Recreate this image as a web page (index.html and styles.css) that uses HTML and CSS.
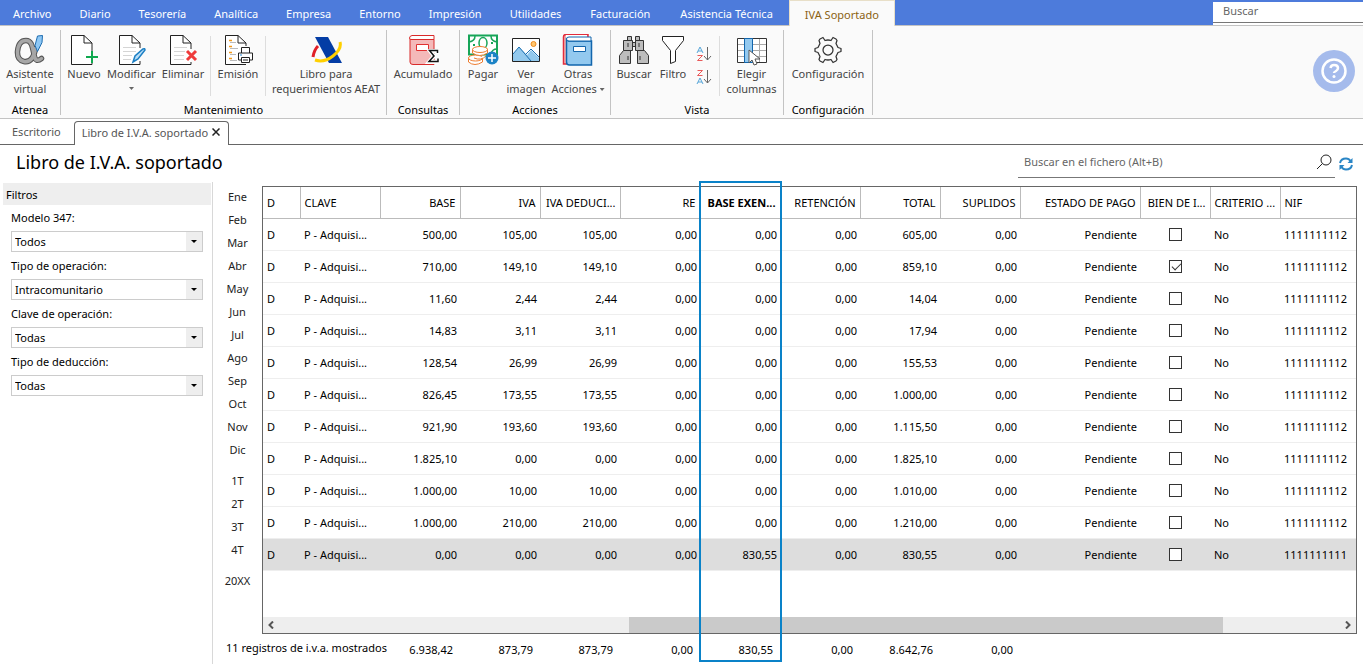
FILE: index.html
```html
<!DOCTYPE html>
<html lang="es">
<head>
<meta charset="utf-8">
<title>Libro de I.V.A. soportado</title>
<link rel="stylesheet" href="styles.css">
</head>
<body>
<nav class="menu">
  <button class="menu-item file">Archivo</button>
  <button class="menu-item">Diario</button>
  <button class="menu-item">Tesorería</button>
  <button class="menu-item">Analítica</button>
  <button class="menu-item">Empresa</button>
  <button class="menu-item">Entorno</button>
  <button class="menu-item">Impresión</button>
  <button class="menu-item">Utilidades</button>
  <button class="menu-item wide">Facturación</button>
  <button class="menu-item wide">Asistencia Técnica</button>
  <button class="menu-item current">IVA Soportado</button>
  <div class="menu-search"><input type="text" placeholder="Buscar" aria-label="Buscar"></div>
</nav>

<div class="ribbon">
  <section class="group">
    <div class="tools">
      <button class="tool w60">
        <svg width="32" height="32" viewBox="0 0 32 32"><g fill="none" stroke-linecap="round"><path d="M21.500 14.500Q19 29 10 27.500Q3 26 3.500 17.500Q4.500 6.500 12 6.500C18.500 6.500 18.500 15 20.500 22.500Q22 29 27.500 24.500" stroke="#555" stroke-width="5.500"/><path d="M21.500 14.500Q19 29 10 27.500Q3 26 3.500 17.500Q4.500 6.500 12 6.500C18.500 6.500 18.500 15 20.500 22.500Q22 29 27.500 24.500" stroke="#a6a6a6" stroke-width="3.500"/></g><path d="M23.500 2l5-.5-.5 7-4.500 9-2.500-6z" fill="#8ec8f5" stroke="#1f6db0"/></svg>
        <span>Asistente<br>virtual</span></button>
    </div>
    <h2>Atenea</h2>
  </section>
  <section class="group">
    <div class="tools">
      <button class="tool w46">
        <svg width="32" height="32" viewBox="0 0 32 32"><path d="M24 17V9l-8-7.500H3.500v29H24V27M16 1.500V9h8" fill="#fff" stroke="#222"/><path d="M24 17v12M18 23h12" stroke="#0fa84e" stroke-width="2"/></svg>
        <span>Nuevo</span></button>
      <button class="tool w49">
        <svg width="32" height="32" viewBox="0 0 32 32"><path d="M24 14V9l-8-7.500H3.500v29H24V27M16 1.500V9h8" fill="#fff" stroke="#222"/><path d="M7 13.500h13M7 17.500h13M7 21.500h9M7 25.500h8" stroke="#d5d5d5"/><path d="M17 28l2-6 8-7q2-1 2 1l-7 9z" fill="#b9def7" stroke="#1c7fc4" stroke-width="1.500"/></svg>
        <span>Modificar</span><i class="caret"></i></button>
      <button class="tool w54">
        <svg width="32" height="32" viewBox="0 0 32 32"><path d="M24 15V9l-8-7.500H3.500v29H24V28M16 1.500V9h8" fill="#fff" stroke="#222"/><path d="M7 13.500h13M7 17.500h11M7 21.500h10M7 25.500h10" stroke="#d5d5d5"/><path d="M20 17l9 9M29 17l-9 9" stroke="#ef3b3b" stroke-width="3"/></svg>
        <span>Eliminar</span></button>
      <hr class="rule">
      <button class="tool w54">
        <svg width="32" height="32" viewBox="0 0 32 32"><path d="M24 12V9l-8-7.500H3.500v29H16M16 1.500V9h8M16 30.500h8" fill="#fff" stroke="#222"/><path d="M7 6.500h3M7 12.500h3M7 18.500h3M7 24.500h3" stroke="#f39a1d" stroke-width="1.500"/><path d="M8 8.500h6M8 14.500h8M8 20.500h6M8 26.500h7" stroke="#bbb"/><path d="M19.500 19v-5.500h8V19M19.500 26h-3v-7h14v7h-3M19.500 23.500h8v5h-8zM21 26h5" fill="#fff" stroke="#222"/><path d="M18 21h2" stroke="#2384d0"/></svg>
        <span>Emisión</span></button>
      <hr class="rule">
      <button class="tool w120">
        <svg width="32" height="32" viewBox="0 0 32 32"><path d="M5 3h13l14 26H19z" fill="#043da5"/><path d="M3 23Q4 16 8 12" fill="none" stroke="#e01f28" stroke-width="3"/><path d="M5 26Q14 29 23 22T30 8" fill="none" stroke="#ffd000" stroke-width="3"/></svg>
        <span>Libro para<br>requerimientos AEAT</span></button>
    </div>
    <h2>Mantenimiento</h2>
  </section>
  <section class="group">
    <div class="tools">
      <button class="tool w72">
        <svg width="32" height="32" viewBox="0 0 32 32"><path d="M3 4v24q0 2.500 3 2.500h21V5.500H5z" fill="#f4b9b9" stroke="#d92a2a"/><path d="M27 1.500H5Q2.500 2 2.500 4T5 5.500h22z" fill="#fff" stroke="#d92a2a"/><path d="M9.500 10.500h12v6h-12z" fill="#fff" stroke="#e03030"/><path d="M31 20v-3h-8l4 5-5 6h9v-3" fill="none" stroke="#fff" stroke-width="4"/><path d="M30.500 19v-2.500H22.500l4.500 5.500-5 5.500h9v-3" fill="none" stroke="#111" stroke-width="1.500"/></svg>
        <span>Acumulado</span></button>
    </div>
    <h2>Consultas</h2>
  </section>
  <section class="group">
    <div class="tools">
      <button class="tool w46">
        <svg width="32" height="32" viewBox="0 0 32 32"><path d="M2 1.500h28v19H2z" fill="#fff" stroke="#17a558" stroke-width="2"/><path d="M2 8q6-1 6-6M30 8q-6-1-6-6M30 15q-5 0-6 5" fill="none" stroke="#17a558" stroke-width="1.500"/><ellipse cx="16" cy="9" rx="4" ry="5.500" fill="none" stroke="#17a558" stroke-width="1.500"/><path d="M6 11h2M24 9h2" stroke="#17a558" stroke-width="2"/><g fill="#fff" stroke="#ed7d31"><path d="M1.500 24v4q6 5 14 0v-4z"/><ellipse cx="8.500" cy="24" rx="7" ry="3"/><path d="M5.500 15v4q7 5 15 0v-4z"/><ellipse cx="13" cy="15.500" rx="7.500" ry="3"/><path d="M7 24q7 3 12-2"/></g><circle cx="25" cy="24" r="6.500" fill="#1c83c6"/><path d="M25 20v8M21 24h8" stroke="#fff" stroke-width="1.500"/></svg>
        <span>Pagar</span></button>
      <button class="tool w40">
        <svg width="32" height="32" viewBox="0 0 32 32"><path d="M2.500 4.500h27v23h-27z" fill="#fff" stroke="#222"/><path d="M3 20l6-7 8 8 4-5 8 8v3H3z" fill="#93c9ed"/><path d="M3 20l6-7 12 14M16 20l5-5 8 8" fill="none" stroke="#1c6fb0"/><circle cx="23.500" cy="10" r="2.500" fill="#ffc66d" stroke="#ee8a20"/></svg>
        <span>Ver<br>imagen</span></button>
      <button class="tool w64">
        <svg width="32" height="32" viewBox="0 0 32 32"><path d="M5 30H1.500V3Q1.500.5 4 .5h22v5" fill="#f7b5b5" stroke="#e22c3c" stroke-width="1.500"/><path d="M4 1h21v3H4z" fill="#fff"/><path d="M4.500 5v23q0 3 3 3h22V7h-23z" fill="#93c9ef" stroke="#1266ad" stroke-width="1.500"/><path d="M29 3H7Q4.500 3 4.500 5T7 7h22z" fill="#fff" stroke="#1266ad"/><path d="M11.500 12.500h12v5h-12z" fill="#fff" stroke="#1266ad"/></svg>
        <span>Otras<br>Acciones <i class="caret side"></i></span></button>
    </div>
    <h2>Acciones</h2>
  </section>
  <section class="group">
    <div class="tools">
      <button class="tool w46">
        <svg width="32" height="32" viewBox="0 0 32 32"><g fill="#bdbdbd" stroke="#333"><path d="M9.500 2.500h4v4h-4zM17.500 2.500h4v4h-4z"/><path d="M5.500 6.500h9v10h-9zM17.500 6.500h8v10h-8zM14.500 8.500h3v4h-3z"/><path d="M1.500 29.500v-8l4-5h7v13zM30.500 29.500v-8l-4-5h-7v13z"/></g><path d="M10 22v4M22 22v4M10 9v4M21 9v4" stroke="#333"/></svg>
        <span>Buscar</span></button>
      <button class="tool w32">
        <svg width="32" height="32" viewBox="0 0 32 32"><path d="M5.500 2.500h21v4l-8 10v11l-5 2v-13l-8-10z" fill="#fff" stroke="#222"/></svg>
        <span>Filtro</span></button>
      <div class="sorts">
        <button class="sort" aria-label="Orden ascendente"><svg width="16" height="16" viewBox="0 0 16 16"><path d="M1 7l3-6 3 6M2 5h4" fill="none" stroke="#56a5d8"/><path d="M1.500 9.500h5l-5 5h5" fill="none" stroke="#e85a5a"/><path d="M11.500 1v13M8 10l3.500 4 3.500-4" fill="none" stroke="#666"/></svg></button>
        <button class="sort" aria-label="Orden descendente"><svg width="16" height="16" viewBox="0 0 16 16"><path d="M1 15l3-6 3 6M2 13h4" fill="none" stroke="#56a5d8"/><path d="M1.500 1.500h5l-5 5h5" fill="none" stroke="#e85a5a"/><path d="M11.500 1v13M8 10l3.500 4 3.500-4" fill="none" stroke="#666"/></svg></button>
      </div>
      <hr class="rule">
      <button class="tool w63">
        <svg width="32" height="32" viewBox="0 0 32 32"><path d="M1.500 4.500h29v24h-29z" fill="#fff" stroke="#333"/><path d="M2 10.500h28M2 16.500h28M2 22.500h28M23.500 5v23" stroke="#aaa"/><path d="M8.500 4.500h8v24h-8z" fill="#93c9ef" stroke="#1266ad"/><path d="M13 16v13l3-3 2 5 3-1-2-5h5z" fill="#fff" stroke="#555"/></svg>
        <span>Elegir<br>columnas</span></button>
    </div>
    <h2>Vista</h2>
  </section>
  <section class="group">
    <div class="tools">
      <button class="tool w88">
        <svg width="32" height="32" viewBox="0 0 32 32"><g fill="none" stroke="#333" stroke-width="1.250" stroke-linejoin="round"><path d="M8 5l3-1.500 2 3q3-1 6 0l2-3L24 5l1 1.500-1 3 2 4 3 1v3l-3 1-2 4 1 3-1 1.500-3 1.500-2-3q-3 1-6 0l-2 3L8 27l-1-1.500 1-3-2-4-3-1v-3l3-1 2-4-1-3z"/><circle cx="16" cy="16" r="5"/></g></svg>
        <span>Configuración</span></button>
    </div>
    <h2>Configuración</h2>
  </section>
  <button class="help" aria-label="Ayuda"><svg width="42" height="42" viewBox="0 0 42 42"><circle cx="21" cy="21" r="21" fill="#a5bbec"/><circle cx="21" cy="21" r="11.500" fill="none" stroke="#fff" stroke-width="2.500"/><path d="M17.500 18q.5-3 3.500-3 4 0 4 3 0 2-2 3t-2 2" fill="none" stroke="#fff" stroke-width="2.500"/><circle cx="21" cy="26.500" r="1.500" fill="#fff"/></svg></button>
</div>

<div class="tabs">
  <button class="tab">Escritorio</button>
  <div class="tab active"><span>Libro de I.V.A. soportado</span><button class="close" aria-label="Cerrar"><svg width="8" height="8" viewBox="0 0 8 8"><path d="M.5.5l7 7M7.500.5l-7 7" stroke="#222" stroke-width="1.500"/></svg></button></div>
</div>

<header class="heading">
  <h1>Libro de I.V.A. soportado</h1>
  <div class="find">
    <input type="text" placeholder="Buscar en el fichero (Alt+B)" aria-label="Buscar en el fichero">
    <button class="icon" aria-label="Buscar"><svg width="16" height="16" viewBox="0 0 16 16"><circle cx="10" cy="6" r="5" fill="none" stroke="#222"/><path d="M6.500 9.500L1 15" stroke="#222"/></svg></button>
  </div>
  <button class="icon" aria-label="Actualizar"><svg width="14" height="14" viewBox="0 0 14 14"><path d="M1 6Q2 1.500 7 1.500q3 0 4.500 2.500M13 8q-1 4.500-6 4.500-3 0-4.500-2.500" fill="none" stroke="#2a86c6" stroke-width="2"/><path d="M13.500 1v5h-5zM.5 13V8h5z" fill="#2a86c6"/></svg></button>
</header>

<main class="work">
  <aside class="filters">
    <h2>Filtros</h2>
    <div class="field"><label for="f1">Modelo 347:</label><div class="combo"><select id="f1"><option>Todos</option></select></div></div>
    <div class="field"><label for="f2">Tipo de operación:</label><div class="combo"><select id="f2"><option>Intracomunitario</option></select></div></div>
    <div class="field"><label for="f3">Clave de operación:</label><div class="combo"><select id="f3"><option>Todas</option></select></div></div>
    <div class="field"><label for="f4">Tipo de deducción:</label><div class="combo"><select id="f4"><option>Todas</option></select></div></div>
  </aside>

  <div class="content">
    <div class="upper">
      <div class="periods">
        <div class="set"><button>Ene</button><button>Feb</button><button>Mar</button><button>Abr</button><button>May</button><button>Jun</button><button>Jul</button><button>Ago</button><button>Sep</button><button>Oct</button><button>Nov</button><button>Dic</button></div>
        <div class="set"><button>1T</button><button>2T</button><button>3T</button><button>4T</button></div>
        <div class="set"><button>20XX</button></div>
      </div>
      <div class="sheet">
        <table>
          <colgroup><col class="c-d"><col class="c-n" span="9"><col class="c-state"><col class="c-flag" span="2"><col></colgroup>
          <thead><tr><th class="l">D</th><th class="l">CLAVE</th><th>BASE</th><th>IVA</th><th>IVA DEDUCI...</th><th>RE</th><th class="strong">BASE EXEN...</th><th>RETENCIÓN</th><th>TOTAL</th><th>SUPLIDOS</th><th>ESTADO DE PAGO</th><th>BIEN DE I...</th><th class="l">CRITERIO ...</th><th class="l">NIF</th></tr></thead>
          <tbody>
            <tr><td class="l">D</td><td class="l">P - Adquisi...</td><td>500,00</td><td>105,00</td><td>105,00</td><td>0,00</td><td>0,00</td><td>0,00</td><td>605,00</td><td>0,00</td><td>Pendiente</td><td class="c"><input type="checkbox" aria-label="Bien de inversión"></td><td class="l">No</td><td class="l">1111111112</td></tr>
            <tr><td class="l">D</td><td class="l">P - Adquisi...</td><td>710,00</td><td>149,10</td><td>149,10</td><td>0,00</td><td>0,00</td><td>0,00</td><td>859,10</td><td>0,00</td><td>Pendiente</td><td class="c"><input type="checkbox" checked aria-label="Bien de inversión"></td><td class="l">No</td><td class="l">1111111112</td></tr>
            <tr><td class="l">D</td><td class="l">P - Adquisi...</td><td>11,60</td><td>2,44</td><td>2,44</td><td>0,00</td><td>0,00</td><td>0,00</td><td>14,04</td><td>0,00</td><td>Pendiente</td><td class="c"><input type="checkbox" aria-label="Bien de inversión"></td><td class="l">No</td><td class="l">1111111112</td></tr>
            <tr><td class="l">D</td><td class="l">P - Adquisi...</td><td>14,83</td><td>3,11</td><td>3,11</td><td>0,00</td><td>0,00</td><td>0,00</td><td>17,94</td><td>0,00</td><td>Pendiente</td><td class="c"><input type="checkbox" aria-label="Bien de inversión"></td><td class="l">No</td><td class="l">1111111112</td></tr>
            <tr><td class="l">D</td><td class="l">P - Adquisi...</td><td>128,54</td><td>26,99</td><td>26,99</td><td>0,00</td><td>0,00</td><td>0,00</td><td>155,53</td><td>0,00</td><td>Pendiente</td><td class="c"><input type="checkbox" aria-label="Bien de inversión"></td><td class="l">No</td><td class="l">1111111112</td></tr>
            <tr><td class="l">D</td><td class="l">P - Adquisi...</td><td>826,45</td><td>173,55</td><td>173,55</td><td>0,00</td><td>0,00</td><td>0,00</td><td>1.000,00</td><td>0,00</td><td>Pendiente</td><td class="c"><input type="checkbox" aria-label="Bien de inversión"></td><td class="l">No</td><td class="l">1111111112</td></tr>
            <tr><td class="l">D</td><td class="l">P - Adquisi...</td><td>921,90</td><td>193,60</td><td>193,60</td><td>0,00</td><td>0,00</td><td>0,00</td><td>1.115,50</td><td>0,00</td><td>Pendiente</td><td class="c"><input type="checkbox" aria-label="Bien de inversión"></td><td class="l">No</td><td class="l">1111111112</td></tr>
            <tr><td class="l">D</td><td class="l">P - Adquisi...</td><td>1.825,10</td><td>0,00</td><td>0,00</td><td>0,00</td><td>0,00</td><td>0,00</td><td>1.825,10</td><td>0,00</td><td>Pendiente</td><td class="c"><input type="checkbox" aria-label="Bien de inversión"></td><td class="l">No</td><td class="l">1111111112</td></tr>
            <tr><td class="l">D</td><td class="l">P - Adquisi...</td><td>1.000,00</td><td>10,00</td><td>10,00</td><td>0,00</td><td>0,00</td><td>0,00</td><td>1.010,00</td><td>0,00</td><td>Pendiente</td><td class="c"><input type="checkbox" aria-label="Bien de inversión"></td><td class="l">No</td><td class="l">1111111112</td></tr>
            <tr><td class="l">D</td><td class="l">P - Adquisi...</td><td>1.000,00</td><td>210,00</td><td>210,00</td><td>0,00</td><td>0,00</td><td>0,00</td><td>1.210,00</td><td>0,00</td><td>Pendiente</td><td class="c"><input type="checkbox" aria-label="Bien de inversión"></td><td class="l">No</td><td class="l">1111111112</td></tr>
            <tr class="selected"><td class="l">D</td><td class="l">P - Adquisi...</td><td>0,00</td><td>0,00</td><td>0,00</td><td>0,00</td><td>830,55</td><td>0,00</td><td>830,55</td><td>0,00</td><td>Pendiente</td><td class="c"><input type="checkbox" aria-label="Bien de inversión"></td><td class="l">No</td><td class="l">1111111111</td></tr>
          </tbody>
        </table>
        <div class="scroll">
          <button aria-label="Desplazar a la izquierda"><svg width="8" height="8" viewBox="0 0 8 8"><path d="M6 .5L2.500 4 6 7.500" fill="none" stroke="#555" stroke-width="2"/></svg></button>
          <div class="track"><div class="thumb"></div></div>
          <button aria-label="Desplazar a la derecha"><svg width="8" height="8" viewBox="0 0 8 8"><path d="M2 .5L5.500 4 2 7.500" fill="none" stroke="#555" stroke-width="2"/></svg></button>
        </div>
      </div>
    </div>
    <footer class="totals">
      <p>11 registros de i.v.a. mostrados</p>
      <output>6.938,42</output><output>873,79</output><output>873,79</output><output>0,00</output><output>830,55</output><output>0,00</output><output>8.642,76</output><output>0,00</output>
    </footer>
    <div class="marker"></div>
  </div>
</main>
</body>
</html>
```
FILE: styles.css
```css
* { box-sizing: border-box; }

body {
  margin: 0;
  min-height: 100vh;
  display: flex;
  flex-direction: column;
  background: #fff;
  color: #000;
  font-family: "Noto Sans", "Open Sans", sans-serif;
  font-size: 11px;
  line-height: 15px;
}

button, input, select { font: inherit; color: inherit; }
button { border: 0; padding: 0; background: none; }
h1, h2, p { margin: 0; font-size: inherit; font-weight: 400; }
svg { display: block; }

/* Menu bar */
.menu {
  display: flex;
  height: 26px;
  background: #4d7bdb;
  border-bottom: 1px solid #c3c3c3;
}
.menu-item { padding: 2px 14px 0; color: #fff; white-space: nowrap; }
.menu-item.file { padding-left: 13px; }
.menu-item.wide { padding: 2px 15px 0; }
.menu-item.current {
  height: 26px;
  padding: 2px 15px 0;
  margin-left: 1px;
  background: #fafafa;
  border: 1px solid #e8dfc8;
  border-bottom: 0;
  color: #8a6212;
}
.menu-search {
  width: 150px;
  margin: 2px 0 0 auto;
  padding-bottom: 2px;
  background: #fff;
}
.menu-search input {
  display: block;
  width: 100%;
  height: 21px;
  padding: 0 10px 3px;
  border: 0;
  border-bottom: 1px solid #777;
  background: none;
}
input::placeholder { color: #666; opacity: 1; }

/* Ribbon */
.ribbon {
  display: flex;
  height: 93px;
  padding-top: 4px;
  background: #fafafa;
  border-bottom: 1px solid #c3c3c3;
}
.group {
  display: flex;
  flex-direction: column;
  height: 85px;
  border-right: 1px solid #c3c3c3;
}
.group h2 { line-height: 11px; text-align: center; }
.tools { display: flex; flex: 1; padding-top: 4px; }
.tool {
  display: flex;
  flex-direction: column;
  align-items: center;
  color: #444;
  white-space: nowrap;
}
.w32 { width: 32px; }
.w40 { width: 40px; }
.w46 { width: 46px; }
.w49 { width: 49px; }
.w54 { width: 54px; }
.w60 { width: 60px; }
.w63 { width: 63px; }
.w64 { width: 64px; }
.w72 { width: 72px; }
.w88 { width: 88px; }
.w120 { width: 120px; }
.rule { width: 1px; height: 60px; margin: 2px 0; border: 0; background: #ddd; }
.caret {
  display: block;
  width: 5px;
  height: 3px;
  margin-top: 6px;
  background: #666;
  clip-path: polygon(0 0, 100% 0, 50% 100%);
}
.caret.side { display: inline-block; margin: 0 0 2px; }
.sorts { display: flex; flex-direction: column; gap: 7px; width: 30px; padding: 12px 0 0 7px; }
.sort { width: 16px; height: 16px; }
.help { margin: 0 8px 7px auto; align-self: center; }

/* Document tabs */
.tabs {
  display: flex;
  align-items: flex-end;
  height: 26px;
  border-bottom: 1px solid #666;
}
.tab { height: 24px; padding: 0 13px 2px 12px; color: #555; }
.tab.active {
  display: flex;
  align-items: center;
  gap: 4px;
  padding: 0 8px 3px 7px;
  margin-bottom: -1px;
  border: 1px solid #666;
  border-bottom: 0;
  border-radius: 4px 4px 0 0;
  background: #fff;
}

/* Title row */
.heading { display: flex; align-items: center; height: 37px; padding-right: 10px; }
.heading h1 { flex: 1; padding: 0 0 3px 16px; font-size: 18px; line-height: 24px; }
.find {
  display: flex;
  align-items: center;
  width: 317px;
  height: 29px;
  margin-right: 4px;
  padding: 0 3px 2px 6px;
  border-bottom: 1px solid #777;
}
.find input { flex: 1; border: 0; padding: 0 0 2px; background: none; }

/* Work area */
.work { display: flex; flex: 1; }
.filters {
  width: 213px;
  padding: 1px 1px 0 3px;
  border-right: 1px solid #d8d8d8;
}
.filters h2 { padding: 4px 3px 3px; background: #eee; }
.field { display: flex; flex-direction: column; gap: 6px; padding: 5px 8px 1px; }
.combo { position: relative; }
.combo select {
  display: block;
  width: 100%;
  height: 21px;
  padding: 0 3px;
  border: 1px solid #ccc;
  border-radius: 0;
  background: linear-gradient(to left, #eee 16px, #fff 16px);
  appearance: none;
}
.combo::after {
  content: "";
  position: absolute;
  right: 6px;
  top: 9px;
  width: 6px;
  height: 3px;
  background: #000;
  clip-path: polygon(0 0, 100% 0, 50% 100%);
  pointer-events: none;
}

.content {
  position: relative;
  display: flex;
  flex: 1;
  flex-direction: column;
  min-width: 0;
  padding: 3px 6px 0 0;
}
.upper { display: flex; flex: 1; }
.periods { display: flex; flex-direction: column; gap: 8px; width: 49px; }
.set { display: flex; flex-direction: column; }
.set button { height: 23px; color: #222; }

.sheet {
  display: flex;
  flex: 1;
  flex-direction: column;
  min-width: 0;
  margin-top: 1px;
  border: 1px solid #666;
}
table { width: 100%; table-layout: fixed; border-collapse: collapse; }
.c-d { width: 37px; }
.c-n { width: 80px; }
.c-state { width: 120px; }
.c-flag { width: 70px; }
th, td {
  height: 32px;
  padding: 0 3px;
  border-bottom: 1px solid #eee;
  font-weight: 400;
  text-align: right;
  white-space: nowrap;
}
th { height: 31px; padding: 0 4px; border-bottom-color: #bbb; border-right: 1px solid #bbb; }
th:last-child { border-right: 0; }
th.strong { font-weight: 700; }
.l { padding-left: 4px; text-align: left; }
.c { text-align: center; }
.selected td { background: #ddd; }
td input {
  position: relative;
  display: block;
  width: 13px;
  height: 13px;
  margin: 0 auto;
  border: 1px solid #333;
  background: #fff;
  appearance: none;
}
td input:checked::after {
  content: "";
  position: absolute;
  left: 2px;
  top: 2px;
  width: 8px;
  height: 4px;
  border: solid #333;
  border-width: 0 0 1px 1px;
  transform: rotate(-45deg);
}

.scroll { display: flex; height: 16px; margin-top: auto; background: #eee; }
.scroll button { display: grid; place-items: center; width: 16px; }
.track { flex: 1; }
.thumb { width: 56%; height: 16px; margin-left: 33%; background: #cacaca; }

.totals { display: flex; height: 30px; padding-left: 13px; line-height: 30px; }
.totals p { width: 147px; line-height: 28px; white-space: nowrap; }
.totals output { width: 80px; text-align: right; padding-top: 1px; }

.marker {
  position: absolute;
  left: 486px;
  top: -1px;
  bottom: 2px;
  width: 83px;
  border: 2px solid #0a82c8;
}
```
